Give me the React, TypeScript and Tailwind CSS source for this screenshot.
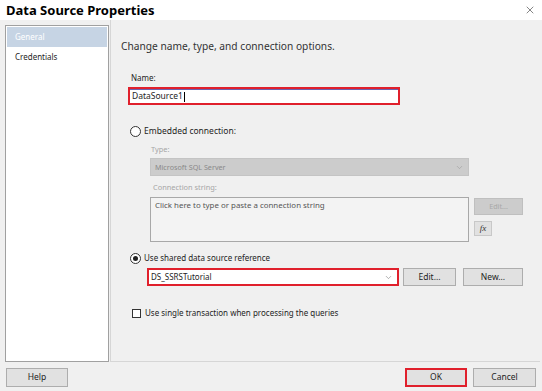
import { X, ChevronDown } from "lucide-react";

// kleine Helfer für die Windows-Buttons
const Btn = ({ label, className = "" }: { label: string; className?: string }) => (
    <div className={`flex items-center justify-center bg-[#e1e1e1] border border-[#adadad] text-[8.5px] text-[#1e1e1e] ${className}`}>
        {label}
    </div>
);

const Radio = ({ checked }: { checked?: boolean }) => (
    <div className="w-[11px] h-[11px] rounded-full border border-[#333] bg-white flex items-center justify-center">
        {checked && <div className="w-[5px] h-[5px] rounded-full bg-[#222]" />}
    </div>
);

export default function App() {
    return (
        <div
            className="w-[542px] h-[391px] flex flex-col bg-[#f0f0f0] overflow-hidden"
            style={{ fontFamily: '"Noto Sans", "Open Sans", sans-serif' }}
        >
            {/* Titelleiste */}
            <div className="h-[20px] bg-white flex items-center justify-between pl-[6px] pr-[6px]">
                <span className="text-[13px] font-bold text-black leading-none">Data Source Properties</span>
                <X size={12} strokeWidth={1.2} className="text-[#333]" />
            </div>

            <div className="flex h-[342px]">
                {/* Liste links */}
                <div className="ml-[5px] mt-[5px] w-[104px] h-[337px] bg-white border border-[#a0a0a0] p-[1px]">
                    <div className="h-[20px] bg-[#c6d4e4] text-white text-[8px] leading-[20px] pl-[8px]">General</div>
                    <div className="h-[20px] text-[#1e1e1e] text-[8px] leading-[20px] pl-[8px]">Credentials</div>
                </div>

                {/* Inhalt rechts */}
                <div className="flex-1 ml-[1px] mr-[2px] border-l border-b border-[#d6d6d6] flex flex-col text-[8px] text-[#1e1e1e]">
                    <div className="mt-[18px] pl-[10px] h-[16px] leading-[16px] text-[10.2px] text-[#333]">
                        Change name, type, and connection options.
                    </div>

                    <div className="mt-[17px] pl-[20px] h-[14px] leading-[14px]">Name:</div>
                    <div className="mt-[2px] ml-[17px] w-[272px] h-[18px] border-2 border-[#e0202c] bg-white">
                        <div className="h-full border-t border-[#6a62b0] flex items-center pl-[2px] text-[8.5px] leading-none">
                            DataSource1<span className="w-px h-[10px] bg-black ml-px" />
                        </div>
                    </div>

                    <div className="mt-[19px] ml-[19px] h-[14px] flex items-center gap-[3px]">
                        <Radio />
                        <span className="text-[8.5px]">Embedded connection:</span>
                    </div>

                    <div className="mt-[4px] pl-[40px] h-[14px] leading-[14px] text-[7.4px] text-[#a6a6a6]">Type:</div>
                    <div className="mt-[2px] ml-[39px] w-[319px] h-[18px] bg-[#cccccc] border border-[#c4c4c4] flex items-center justify-between pl-[4px] pr-[4px] text-[7.2px] text-[#8a8a8a]">
                        <span>Microsoft SQL Server</span>
                        <ChevronDown size={9} strokeWidth={1.5} className="text-[#999]" />
                    </div>

                    <div className="mt-[4px] pl-[42px] h-[14px] leading-[14px] text-[7.4px] text-[#a6a6a6]">Connection string:</div>
                    <div className="mt-[3px] ml-[39px] flex gap-[5px]">
                        <div className="w-[319px] h-[45px] bg-[#f3f3f3] border border-[#a8a8a8] pl-[4px] pt-[2px] text-[7.9px] text-[#555]">
                            Click here to type or paste a connection string
                        </div>
                        <div className="flex flex-col gap-[6px] pt-[1px]">
                            <div className="w-[49px] h-[17px] bg-[#cccccc] border border-[#bfbfbf] flex items-center justify-center text-[7.2px] text-[#a8a8a8]">
                                Edit...
                            </div>
                            <div className="w-[18px] h-[15px] bg-[#e1e1e1] border border-[#c8c8c8] flex items-center justify-center text-[9px] italic text-[#333]" style={{ fontFamily: '"Liberation Serif", serif' }}>
                                fx
                            </div>
                        </div>
                    </div>

                    <div className="mt-[9px] ml-[19px] h-[14px] flex items-center gap-[3px]">
                        <Radio checked />
                        <span>Use shared data source reference</span>
                    </div>

                    <div className="mt-[3px] ml-[36px] flex items-center">
                        <div className="w-[252px] h-[18px] border-2 border-[#e0202c] bg-white flex items-center justify-between pl-[2px] pr-[4px]">
                            <span>DS_SSRSTutorial</span>
                            <ChevronDown size={9} strokeWidth={1.5} className="text-[#777]" />
                        </div>
                        <Btn label="Edit..." className="ml-[4px] w-[53px] h-[18px]" />
                        <Btn label="New..." className="ml-[7px] w-[60px] h-[18px]" />
                    </div>

                    <div className="mt-[20px] ml-[21px] h-[14px] flex items-center gap-[4px]">
                        <div className="w-[9px] h-[9px] border border-[#333] bg-white" />
                        <span>Use single transaction when processing the queries</span>
                    </div>
                </div>
            </div>

            {/* Buttonleiste */}
            <div className="mt-[6px] flex items-center">
                <Btn label="Help" className="ml-[6px] w-[62px] h-[19px]" />
                <div className="ml-auto mr-[6px] flex gap-[6px]">
                    <Btn label="OK" className="w-[62px] h-[19px] !border-2 !border-[#e0202c]" />
                    <Btn label="Cancel" className="w-[63px] h-[19px]" />
                </div>
            </div>
        </div>
    );
}
